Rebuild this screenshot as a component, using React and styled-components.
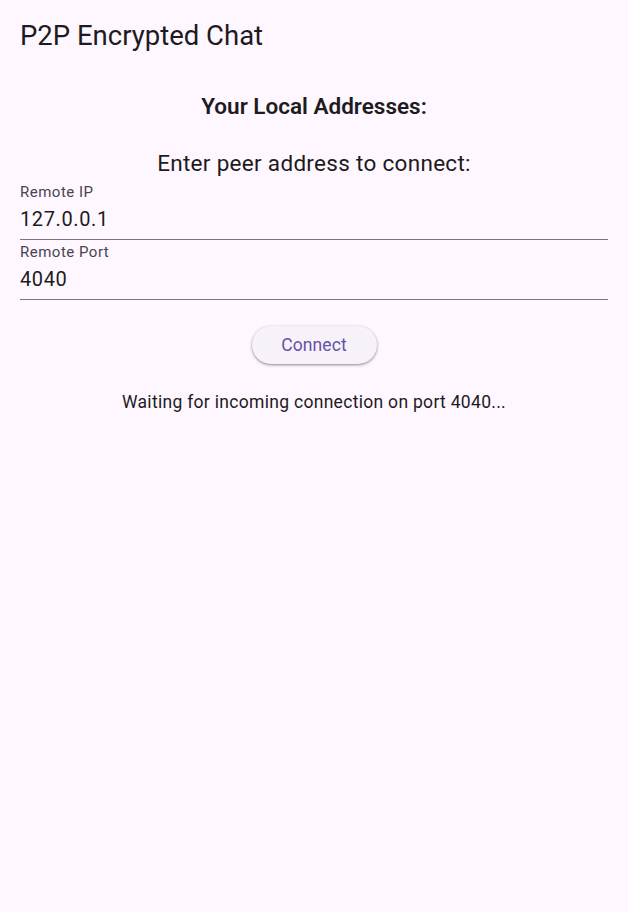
import React from "react";
import styled, { createGlobalStyle } from "styled-components";

const GlobalStyle = createGlobalStyle`
  html, body {
    margin: 0;
    padding: 0;
    background: #fef7ff;
  }
  body {
    font-family: Roboto, "Noto Sans", sans-serif;
    color: #1d1b20;
  }
`;

const Page = styled.div`
  width: 628px;
  min-height: 912px;
  background: #fef7ff;
  display: flex;
  flex-direction: column;
`;

const AppBar = styled.header`
  height: 70px;
  display: flex;
  align-items: center;
  padding: 0 20px;
  box-sizing: border-box;
  font-size: 27.5px;
  font-weight: 400;
  color: #1d1b20;
`;

const Body = styled.main`
  display: flex;
  flex-direction: column;
  align-items: stretch;
  padding: 0 20px;
`;

const Heading = styled.div`
  text-align: center;
  font-size: 22.5px;
  font-weight: ${(p) => p.weight || 400};
  letter-spacing: ${(p) => p.spacing || 0}px;
  line-height: 28px;
  margin-top: ${(p) => p.top || 0}px;
`;

const Fields = styled.div`
  display: flex;
  flex-direction: column;
  margin-top: 3px;
`;

const Field = styled.label`
  display: flex;
  flex-direction: column;
  height: 60px;
  box-sizing: border-box;
  border-bottom: 1px solid #79747e;
  padding-top: 3px;

  .label {
    font-size: 15px;
    color: #49454f;
    line-height: 18px;
    letter-spacing: 0.5px;
  }

  input {
    border: none;
    outline: none;
    background: transparent;
    padding: 0;
    margin-top: 4px;
    font-family: Roboto, "Noto Sans", sans-serif;
    font-size: 20px;
    line-height: 28px;
    color: #1d1b20;
    letter-spacing: 0.62px;
  }
`;

const ButtonRow = styled.div`
  display: flex;
  justify-content: center;
  margin-top: 26px;
`;

const ConnectButton = styled.button`
  width: 125px;
  height: 38px;
  border: none;
  border-radius: 19px;
  background: #f7f2fa;
  color: #6750a4;
  font-family: Roboto, "Noto Sans", sans-serif;
  font-size: 17.5px;
  font-weight: 400;
  letter-spacing: 0.1px;
  box-shadow: 0 1px 2px rgba(0, 0, 0, 0.3), 0 1px 3px 1px rgba(0, 0, 0, 0.12);
  cursor: pointer;
`;

const Status = styled.div`
  text-align: center;
  font-size: 17.5px;
  line-height: 24px;
  margin-top: 26px;
  color: #1d1b20;
  letter-spacing: 0.3px;
`;

export default function App() {
  return (
    <Page>
      <GlobalStyle />
      <AppBar>P2P Encrypted Chat</AppBar>
      <Body>
        <Heading weight={600} top={22}>
          Your Local Addresses:
        </Heading>
        <Heading top={29} spacing={0.3}>
          Enter peer address to connect:
        </Heading>
        <Fields>
          <Field>
            <span className="label">Remote IP</span>
            <input defaultValue="127.0.0.1" />
          </Field>
          <Field>
            <span className="label">Remote Port</span>
            <input defaultValue="4040" />
          </Field>
        </Fields>
        <ButtonRow>
          <ConnectButton>Connect</ConnectButton>
        </ButtonRow>
        <Status>Waiting for incoming connection on port 4040...</Status>
      </Body>
    </Page>
  );
}
